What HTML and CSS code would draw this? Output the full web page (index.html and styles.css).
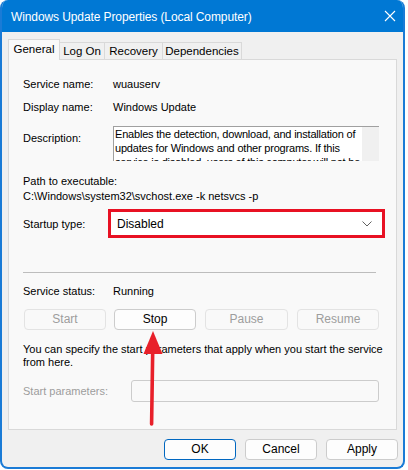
FILE: index.html
```html
<!DOCTYPE html>
<html>
<head>
<meta charset="utf-8">
<link rel="stylesheet" href="styles.css">
</head>
<body>
<div class="window">
  <div class="titlebar">
    <span class="title">Windows Update Properties (Local Computer)</span>
    <svg class="close" width="12" height="12" viewBox="0 0 12 12"><path d="M1 1 L11 11 M11 1 L1 11" stroke="#fff" stroke-width="1.1" fill="none"/></svg>
  </div>
  <div class="client">
    <div class="tabs">
      <div class="tab active">General</div>
      <div class="tab">Log On</div>
      <div class="tab">Recovery</div>
      <div class="tab">Dependencies</div>
    </div>
    <div class="panel">
      <div class="row r1"><span class="label">Service name:</span><span class="value">wuauserv</span></div>
      <div class="row r2"><span class="label">Display name:</span><span class="value">Windows Update</span></div>
      <div class="row r3">
        <span class="label desc-label">Description:</span>
        <div class="descbox">
          <div class="desctext">Enables the detection, download, and installation of<br>updates for Windows and other programs. If this<br>service is disabled, users of this computer will not be<br>able to use Windows Update.</div>
          <div class="scroll"></div>
        </div>
      </div>
      <div class="line r4">Path to executable:</div>
      <div class="line r5">C:\Windows\system32\svchost.exe -k netsvcs -p</div>
      <div class="row r6">
        <span class="label lbl-start">Startup type:</span>
        <div class="select-wrap">
          <div class="select">
            <span>Disabled</span>
            <svg class="chev" width="10" height="6" viewBox="0 0 10 6"><path d="M0.5 0.5 L5 5 L9.5 0.5" stroke="#606060" stroke-width="1" fill="none"/></svg>
          </div>
        </div>
      </div>
      <div class="sep"></div>
      <div class="row r7"><span class="label">Service status:</span><span class="value">Running</span></div>
      <div class="btnrow">
        <div class="btn disabled">Start</div>
        <div class="btn">Stop</div>
        <div class="btn disabled">Pause</div>
        <div class="btn disabled">Resume</div>
      </div>
      <div class="para">You can specify the start parameters that apply when you start the service<br>from here.</div>
      <div class="row r8">
        <span class="label lbl-params">Start parameters:</span>
        <div class="input"></div>
      </div>
    </div>
    <div class="footer">
      <div class="btn fbtn ok">OK</div>
      <div class="btn fbtn">Cancel</div>
      <div class="btn fbtn">Apply</div>
    </div>
  </div>
  <svg class="arrow" width="40" height="110" viewBox="0 0 40 110">
    <path d="M13 0 L22.5 23 L3.5 23 Z" fill="#e8202a"/>
    <path d="M12.7 20 L11.6 93" stroke="#e8202a" stroke-width="3.6" stroke-linecap="round" fill="none"/>
  </svg>
</div>
</body>
</html>
```

FILE: styles.css
```css
html, body {
  margin: 0;
  padding: 0;
  background: #ffffff;
}
body {
  font-family: "Liberation Sans", Arial, sans-serif;
  font-size: 11px;
  color: #000;
}
.window {
  position: relative;
  box-sizing: border-box;
  width: 405px;
  height: 469px;
  border: 2px solid #1a7bd6;
  border-top: 0;
  border-radius: 8px;
  overflow: hidden;
  background: #f0f0f0;
  display: flex;
  flex-direction: column;
}
.titlebar {
  height: 32px;
  background: #0078d4;
  display: flex;
  align-items: center;
  padding: 0 0 0 9px;
  flex-shrink: 0;
}
.title {
  color: #fff;
  font-family: "Liberation Sans", Arial, sans-serif;
  font-size: 12px;
  letter-spacing: -0.1px;
  flex: 1;
  padding-top: 1px;
}
.close {
  margin-right: 7px;
}
.client {
  flex: 1;
  padding: 7px 6px 0 6px;
  display: flex;
  flex-direction: column;
}
.tabs {
  display: flex;
  align-items: flex-end;
  height: 20px;
  position: relative;
  z-index: 1;
}
.tab {
  box-sizing: border-box;
  height: 17px;
  padding: 0;
  font-size: 11.5px;
  line-height: 16px;
  text-align: center;
  white-space: nowrap;
  border: 1px solid #d9d9d9;
  border-bottom: 0;
  border-left: 0;
  background: #f0f0f0;
  color: #000;
}
.tab.active {
  height: 21px;
  margin-bottom: -1px;
  border-left: 1px solid #d9d9d9;
  background: #f9f9f9;
  line-height: 19px;
  width: 52px;
}
.tab:nth-child(2) { width: 45px; }
.tab:nth-child(3) { width: 58px; }
.tab:nth-child(4) { width: 79px; }
.panel {
  box-sizing: border-box;
  width: 389px;
  height: 371px;
  border: 1px solid #d9d9d9;
  background: #f9f9f9;
  padding: 17px 0 0 14px;
  display: flex;
  flex-direction: column;
}
.row {
  display: flex;
  align-items: center;
  line-height: 14px;
}
.label {
  width: 90px;
  flex-shrink: 0;
}
.r2 { margin-top: 9px; }
.r3 { margin-top: 12px; align-items: flex-start; }
.desc-label { margin-top: 5px; }
.descbox {
  box-sizing: border-box;
  width: 266px;
  height: 35px;
  border-top: 1px solid #a0a0a0;
  border-left: 1px solid #a0a0a0;
  background: #fff;
  display: flex;
  overflow: hidden;
}
.desctext {
  flex: 1;
  padding: 0 0 0 1px;
  line-height: 14px;
  white-space: nowrap;
  letter-spacing: -0.2px;
  overflow: hidden;
}
.scroll {
  width: 17px;
  flex-shrink: 0;
  background: #f0f0f0;
}
.line { line-height: 14px; }
.r4 { margin-top: 13px; }
.r5 { margin-top: 1px; }
.r6 { margin-top: 6px; }
.lbl-start { width: 85px; }
.select-wrap {
  box-sizing: border-box;
  width: 277px;
  height: 29px;
  border: 3px solid #e81123;
}
.select {
  box-sizing: border-box;
  height: 100%;
  background: #fff;
  display: flex;
  align-items: center;
  justify-content: space-between;
  padding: 0 10px 0 6px;
  font-size: 12px;
}
.sep {
  width: 353px;
  height: 1px;
  background: #bdbdbd;
  margin-top: 34px;
}
.r7 { margin-top: 11px; }
.btnrow {
  display: flex;
  gap: 8px;
  margin-top: 11px;
  padding-left: 1px;
}
.btn {
  box-sizing: border-box;
  width: 82px;
  height: 21px;
  border: 1px solid #cccccc;
  border-radius: 4px;
  background: #fdfdfd;
  text-align: center;
  font-size: 12px;
  line-height: 19px;
}
.btn.disabled {
  border-color: #e3e3e3;
  background: #f9f9f9;
  color: #9d9d9d;
}
.btnrow .btn:nth-child(3) { margin-left: 1px; width: 83px; }
.btnrow .btn:nth-child(4) { margin-left: 1px; }
.para {
  margin-top: 13px;
  line-height: 13px;
  white-space: nowrap;
}
.r8 { margin-top: 11px; }
.lbl-params {
  width: 108px;
  color: #9d9d9d;
}
.input {
  box-sizing: border-box;
  width: 248px;
  height: 22px;
  border: 1px solid #cccccc;
  border-radius: 3px;
  background: #f9f9f9;
}
.footer {
  display: flex;
  justify-content: flex-end;
  gap: 9px;
  margin-top: 9px;
  margin-right: -1px;
}
.fbtn {
  width: 72px;
  height: 21px;
}
.ok {
  border-color: #0067c0;
}
.arrow {
  position: absolute;
  left: 138px;
  top: 331px;
}
```
